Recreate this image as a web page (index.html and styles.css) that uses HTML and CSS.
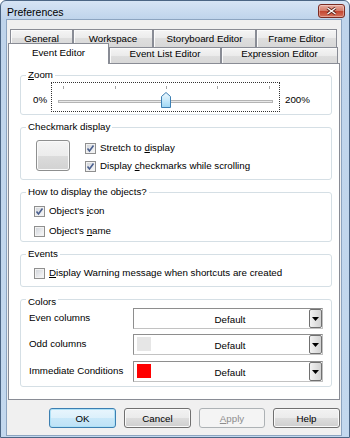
FILE: index.html
```html
<!DOCTYPE html>
<html lang="en">
<head>
    <meta charset="UTF-8">
    <meta name="viewport" content="width=device-width, initial-scale=1.0">
    <title>Preferences</title>
    <link rel="stylesheet" href="styles.css">
</head>
<body>

    <div class="window">
        <!-- Title bar -->
        <div class="titlebar">
            <span class="title">Preferences</span>
            <span class="close-btn">
                <svg width="11" height="8" viewBox="0 0 11 8">
                    <path d="M1.5 1l8 6M9.5 1l-8 6" stroke="#5a1f16" stroke-width="3" fill="none"/>
                    <path d="M1.5 1l8 6M9.5 1l-8 6" stroke="#fff" stroke-width="1.4" fill="none"/>
                </svg>
            </span>
        </div>

        <div class="client">
            <!-- Tabs -->
            <div class="tabs">
                <div class="tab-row back-row">
                    <div class="tab tab-general">General</div>
                    <div class="tab tab-workspace">Workspace</div>
                    <div class="tab tab-storyboard">Storyboard Editor</div>
                    <div class="tab tab-frame">Frame Editor</div>
                </div>
                <div class="tab-row front-row">
                    <div class="tab tab-active">Event Editor</div>
                    <div class="tab tab-eventlist">Event List Editor</div>
                    <div class="tab tab-expression">Expression Editor</div>
                </div>
            </div>

            <div class="panel">

                <!-- Zoom -->
                <div class="group group-zoom">
                    <span class="group-label"><u>Z</u>oom</span>
                    <div class="zoom-row">
                        <span class="zoom-min">0%</span>
                        <div class="slider-box">
                            <svg width="227" height="28" viewBox="0 0 227 28">
                                <defs>
                                    <linearGradient id="thumb-fill" x1="0" y1="0" x2="0" y2="1">
                                        <stop offset="0" stop-color="#eef8fe"/>
                                        <stop offset="0.5" stop-color="#c9eafb"/>
                                        <stop offset="1" stop-color="#9fd6f3"/>
                                    </linearGradient>
                                </defs>
                                <path d="M11.5 3v3M63.5 3v3M114.5 3v3M165.5 3v3M217.5 3v3" stroke="#a8a8a8"/>
                                <rect x="6.5" y="17.5" width="214" height="2" fill="#e9e9e9" stroke="#b4b4b4"/>
                                <path d="M109.5 24.5V13.5L114 9.5L118.5 13.5V24.5Z" fill="url(#thumb-fill)" stroke="#3d7fb3"/>
                            </svg>
                        </div>
                        <span class="zoom-max">200%</span>
                    </div>
                </div>

                <!-- Checkmark display -->
                <div class="group group-checkmark">
                    <span class="group-label">Checkmark display</span>
                    <div class="checkmark-row">
                        <div class="preview-btn"></div>
                        <div class="check-list">
                            <div class="check-item">
                                <span class="checkbox"><svg viewBox="0 0 9 9"><path d="M1.5 4.5l2 2.5 4-5.5"/></svg></span>
                                <span class="check-text">Stretch to <u>d</u>isplay</span>
                            </div>
                            <div class="check-item">
                                <span class="checkbox"><svg viewBox="0 0 9 9"><path d="M1.5 4.5l2 2.5 4-5.5"/></svg></span>
                                <span class="check-text">Display <u>c</u>heckmarks while scrolling</span>
                            </div>
                        </div>
                    </div>
                </div>

                <!-- How to display the objects -->
                <div class="group group-objects">
                    <span class="group-label">How to display the objects?</span>
                    <div class="check-list indent">
                        <div class="check-item tall">
                            <span class="checkbox"><svg viewBox="0 0 9 9"><path d="M1.5 4.5l2 2.5 4-5.5"/></svg></span>
                            <span class="check-text">Object's <u>i</u>con</span>
                        </div>
                        <div class="check-item tall">
                            <span class="checkbox"></span>
                            <span class="check-text">Object's <u>n</u>ame</span>
                        </div>
                    </div>
                </div>

                <!-- Events -->
                <div class="group group-events">
                    <span class="group-label">Events</span>
                    <div class="check-list indent">
                        <div class="check-item tall">
                            <span class="checkbox"></span>
                            <span class="check-text"><u>D</u>isplay Warning message when shortcuts are created</span>
                        </div>
                    </div>
                </div>

                <!-- Colors -->
                <div class="group group-colors">
                    <span class="group-label">Colors</span>
                    <div class="color-row">
                        <span class="color-name">Even columns</span>
                        <div class="combo">
                            <span class="swatch"></span>
                            <span class="combo-text">Default</span>
                            <span class="combo-btn"><svg width="7" height="4" viewBox="0 0 7 4"><path d="M0 0h7L3.5 4z"/></svg></span>
                        </div>
                    </div>
                    <div class="color-row">
                        <span class="color-name">Odd columns</span>
                        <div class="combo">
                            <span class="swatch swatch-grey"></span>
                            <span class="combo-text">Default</span>
                            <span class="combo-btn"><svg width="7" height="4" viewBox="0 0 7 4"><path d="M0 0h7L3.5 4z"/></svg></span>
                        </div>
                    </div>
                    <div class="color-row last">
                        <span class="color-name">Immediate Conditions</span>
                        <div class="combo">
                            <span class="swatch swatch-red"></span>
                            <span class="combo-text">Default</span>
                            <span class="combo-btn"><svg width="7" height="4" viewBox="0 0 7 4"><path d="M0 0h7L3.5 4z"/></svg></span>
                        </div>
                    </div>
                </div>

            </div>

            <!-- Dialog buttons -->
            <div class="button-row">
                <button class="dlg-btn btn-default">OK</button>
                <button class="dlg-btn">Cancel</button>
                <button class="dlg-btn btn-apply" disabled><u>A</u>pply</button>
                <button class="dlg-btn">Help</button>
            </div>
        </div>
    </div>

</body>
</html>
```

FILE: styles.css
```css
* {
    box-sizing: border-box;
}
body {
    margin: 0;
    font-family: "Liberation Sans", Arial, sans-serif;
    font-size: 9.75px;
    color: #000;
    background: #fff;
}
u {
    text-decoration: underline;
    text-underline-offset: 1px;
}

/* Window frame */
.window {
    width: 350px;
    height: 438px;
    border: 1px solid #4b6584;
    border-radius: 6px 6px 0 0;
    background: linear-gradient(#d6e4f4, #bfd4eb 18px, #c3d8ee);
    padding: 0 7px 1px 5px;
}
.titlebar {
    height: 18px;
    display: flex;
    align-items: flex-start;
    justify-content: space-between;
}
.title {
    font-size: 10.5px;
    line-height: 12px;
    margin: 5px 0 0 1px;
}
.close-btn {
    width: 27px;
    height: 14px;
    margin: 3px -3px 0 0;
    border: 1px solid #7b2b22;
    border-radius: 3px;
    background: linear-gradient(#e7aca0, #d47b69 50%, #c2432e 50%, #d6735e);
    box-shadow: inset 0 0 0 1px rgba(255, 255, 255, 0.35);
    display: flex;
    align-items: center;
    justify-content: center;
}
.client {
    height: 417px;
    background: #f0f0f0;
    border: 1px solid #8ca4c0;
}

/* Tabs */
.tabs {
    margin: 9px 0 0 1px;
    width: 332px;
}
.tab-row {
    display: flex;
}
.back-row {
    height: 18px;
    padding-left: 2px;
}
.front-row {
    height: 16px;
}
.tab {
    border: 1px solid #898c95;
    border-bottom: none;
    background: linear-gradient(#f5f5f5, #ebebeb 50%, #dedede 50%, #d8d8d8);
    box-shadow: inset 1px 1px 0 #fbfbfb;
    text-align: center;
    line-height: 12px;
    white-space: nowrap;
}
.back-row .tab {
    height: 18px;
    padding-top: 3px;
}
.front-row .tab {
    height: 16px;
}
.tab-general { width: 63px; }
.tab-workspace { width: 80px; }
.tab-storyboard { width: 103px; }
.tab-frame { width: 81px; }
.tab-eventlist { width: 112px; }
.tab-expression { width: 117px; }
.front-row .tab-active {
    position: relative;
    z-index: 1;
    width: 101px;
    height: 21px;
    margin-top: -4px;
    padding-top: 3px;
    background: #fff;
    box-shadow: none;
}

/* Panel and group boxes */
.panel {
    margin-left: 1px;
    width: 332px;
    height: 337px;
    background: #fff;
    border: 1px solid #898c95;
}
.group {
    margin: 12px 7px 0 11px;
    border: 1px solid #d5dfe5;
    border-radius: 3px;
    box-shadow: inset 1px 1px 0 #fff;
}
.group-label {
    display: block;
    width: fit-content;
    height: 12px;
    line-height: 12px;
    margin: -7px 0 0 5px;
    padding: 0 2px;
    background: #fff;
}
.group-zoom {
    margin-top: 11px;
    padding-bottom: 2px;
}
.zoom-row {
    display: flex;
    align-items: flex-start;
    height: 30px;
    margin-top: 1px;
    padding-left: 12px;
}
.zoom-min,
.zoom-max {
    line-height: 12px;
    margin-top: 12px;
}
.zoom-min {
    width: 18px;
}
.zoom-max {
    margin-left: 5px;
}
.slider-box {
    width: 229px;
    height: 30px;
    border: 1px dotted #333;
}
.slider-box svg {
    display: block;
}

.checkmark-row {
    display: flex;
    padding: 6px 0 4px 15px;
}
.preview-btn {
    width: 34px;
    height: 31px;
    margin-top: 1px;
    border: 1px solid #8e8f8f;
    border-radius: 3px;
    background: linear-gradient(#f4f4f4, #ececec 50%, #dcdcdc 50%, #d2d2d2);
    box-shadow: inset 0 0 0 1px #fafafa;
}
.checkmark-row .check-list {
    margin-left: 15px;
}
.check-item {
    display: flex;
    align-items: center;
    height: 18px;
}
.check-item.tall {
    height: 20px;
}
.check-list.indent {
    padding: 3px 0 0 13px;
}
.group-events {
    padding-bottom: 3px;
}
.checkbox {
    width: 11px;
    height: 11px;
    flex-shrink: 0;
    border: 1px solid #8f8f8f;
    background: linear-gradient(135deg, #cdd1d7, #eeeff1 70%, #f6f6f6);
    box-shadow: inset 0 0 0 1px #f2f2f2;
    display: flex;
    align-items: center;
    justify-content: center;
}
.checkbox svg {
    width: 9px;
    height: 9px;
    fill: none;
    stroke: #4a5f8e;
    stroke-width: 1.6;
}
.check-text {
    margin-left: 4px;
    line-height: 12px;
    white-space: nowrap;
}

/* Colors */
.group-colors {
    padding: 3px 0 4px 0;
}
.color-row {
    display: flex;
    align-items: center;
    height: 21px;
    padding: 0 8px;
}
.color-row + .color-row {
    margin-top: 5px;
}
.color-row.last {
    margin-top: 6px;
}
.color-name {
    flex: 1;
    line-height: 12px;
    margin-top: -2px;
}
.combo {
    width: 190px;
    height: 21px;
    display: flex;
    border: 1px solid #a4a4a4;
    border-color: #8e8e8e #c2c2c2 #c2c2c2 #8e8e8e;
    background: #fff;
}
.swatch {
    width: 14px;
    height: 14px;
    margin: 2px 0 0 3px;
}
.swatch-grey {
    background: #e6e6e6;
}
.swatch-red {
    background: #ff0000;
}
.combo-text {
    flex: 1;
    text-align: center;
    line-height: 19px;
    padding-top: 1px;
}
.combo-btn {
    width: 13px;
    height: 19px;
    border: 1px solid #707070;
    border-radius: 2px;
    background: linear-gradient(90deg, #f2f2f2, #e2e2e2 50%, #d2d2d2);
    display: flex;
    align-items: center;
    justify-content: center;
}

/* Dialog buttons */
.button-row {
    display: flex;
    justify-content: flex-end;
    gap: 8px;
    margin-top: 8px;
    padding-right: 1px;
}
.dlg-btn {
    width: 67px;
    height: 20px;
    padding: 0;
    font-family: inherit;
    font-size: 9.75px;
    color: #000;
    border: 1px solid #707070;
    border-radius: 3px;
    background: linear-gradient(#f2f2f2, #ebebeb 50%, #dddddd 50%, #cfcfcf);
    box-shadow: inset 0 0 0 1px #fafafa;
}
.btn-default {
    border-color: #3c7fb1;
    background: linear-gradient(#e8f5fd, #dcf0fb 50%, #c9e8f9 50%, #bde2f6);
    box-shadow: inset 0 0 0 1px #aee1f7;
}
.btn-apply {
    width: 66px;
}
.dlg-btn:disabled {
    color: #8d8d8d;
    border-color: #adb2b5;
    background: #f4f4f4;
    box-shadow: none;
}
```
